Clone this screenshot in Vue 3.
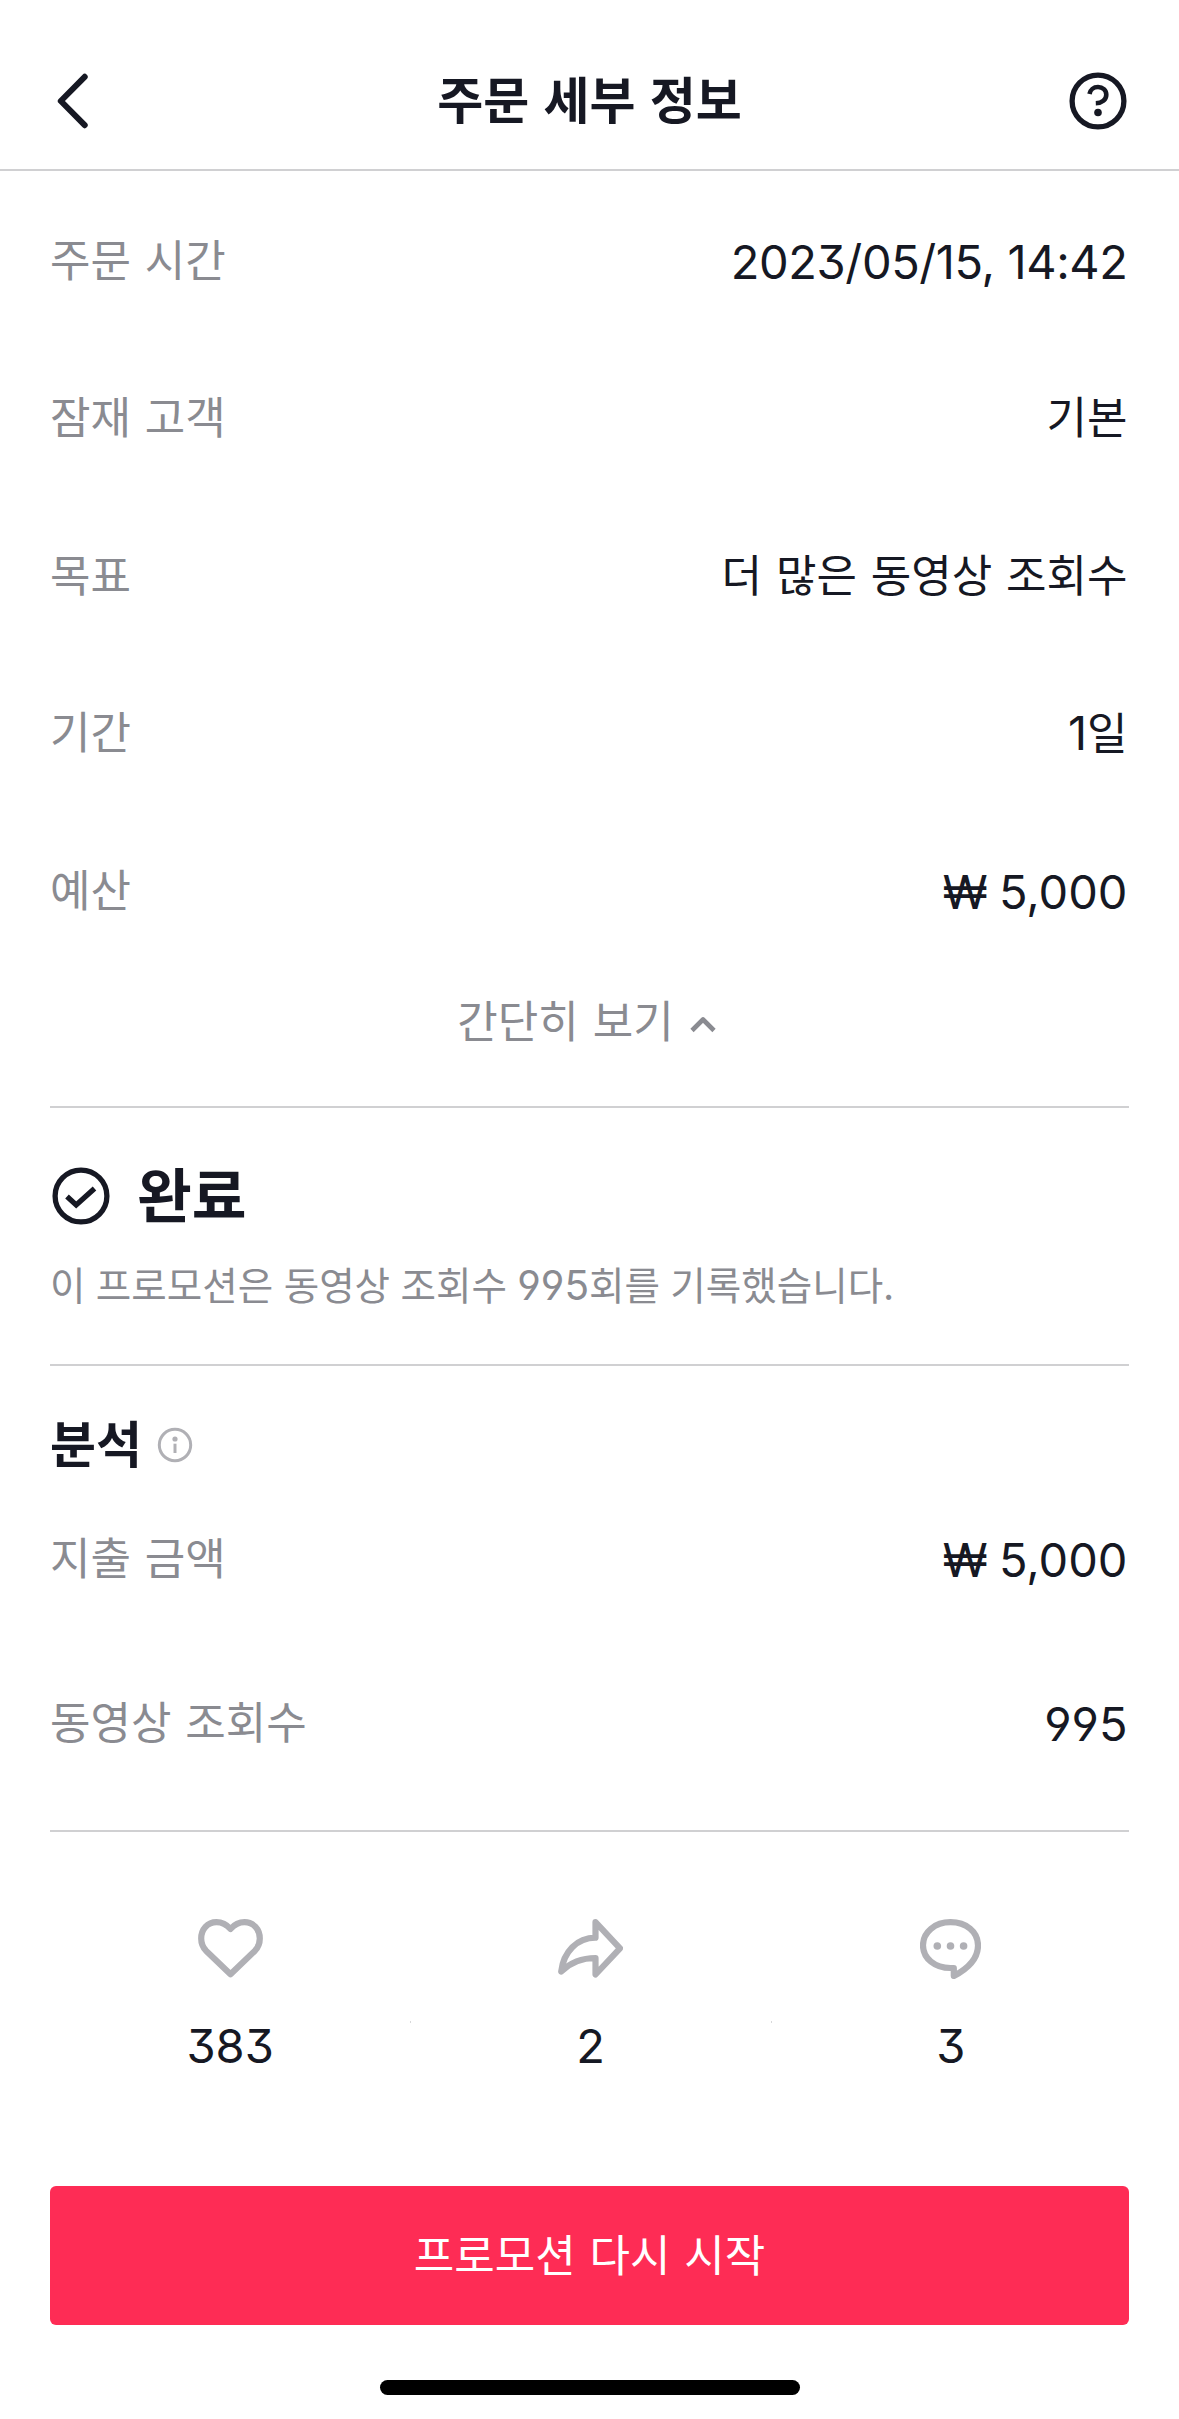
<script setup>
const orderRows = [
  { label: '주문 시간', number: '2023/05/15, 14:42', dense: true },
  { label: '잠재 고객', text: '기본' },
  { label: '목표', text: '더 많은 동영상 조회수' },
  { label: '기간', number: '1', text: '일' },
  { label: '예산', number: '₩ 5,000' },
]

const statRows = [
  { label: '지출 금액', value: '₩ 5,000' },
  { label: '동영상 조회수', value: '995' },
]
</script>

<template>
  <div class="page">
    <header class="nav">
      <svg class="nav-icon" width="60" height="60" viewBox="0 0 60 60">
        <path d="M34.700 5.800 10.800 30 34.700 54.200" />
      </svg>
      <h1>주문 세부 정보</h1>
      <svg class="nav-icon" width="58" height="58" viewBox="0 0 58 58">
        <circle class="ring" cx="29" cy="29" r="25.900" />
        <path class="mark" d="M20.500 22C21.200 17.800 24.600 15 29 15C33.700 15 37.300 18.200 37.300 22.700C37.300 27.500 33 31 26.800 31.200" />
        <circle class="dot" cx="29" cy="40.500" r="3.800" />
      </svg>
    </header>

    <main>
      <section class="order">
        <div v-for="row in orderRows" :key="row.label" class="row">
          <span class="label">{{ row.label }}</span>
          <span class="value" :class="{ hangul: !row.number, mixed: row.number && row.text }"><span v-if="row.number" class="num" :class="{ dense: row.dense }">{{ row.number }}</span>{{ row.text }}</span>
        </div>
        <div class="collapse">
          <span>간단히 보기</span>
          <svg width="26" height="18" viewBox="0 0 26 18"><path d="M2 15.500 13 4.500 24 15.500" /></svg>
        </div>
      </section>

      <section class="status">
        <div class="status-head">
          <svg width="58" height="58" viewBox="0 0 58 58">
            <circle cx="29" cy="29" r="25.900" />
            <path d="M15 29.500 24.200 38 42.500 21.500" />
          </svg>
          <h2>완료</h2>
        </div>
        <p>이 프로모션은 동영상 조회수 <span class="count">995</span>회를 기록했습니다.</p>
      </section>

      <section class="analysis">
        <div class="analysis-head">
          <h3>분석</h3>
          <svg width="36" height="36" viewBox="0 0 36 36">
            <circle class="ring" cx="18" cy="18" r="15.700" />
            <circle class="dot" cx="18" cy="12" r="2.600" />
            <path d="M18 16.700V26" />
          </svg>
        </div>
        <div v-for="row in statRows" :key="row.label" class="row">
          <span class="label">{{ row.label }}</span>
          <span class="value"><span class="num">{{ row.value }}</span></span>
        </div>
      </section>

      <section class="engagement">
        <div class="metric">
          <svg width="65" height="60" viewBox="0 0 65 60">
            <path d="M32.500 10C28.500 5.500 23.800 3.200 18.500 3.200C9.500 3.200 3.200 10.300 3.200 19.500C3.200 24.500 5 28.500 8 31.700L32.500 55.300L57 31.700C60 28.500 61.800 24.500 61.800 19.500C61.800 10.300 55.500 3.200 46.500 3.200C41.200 3.200 36.500 5.500 32.500 10Z" />
          </svg>
          <span class="num">383</span>
        </div>
        <div class="metric">
          <svg width="65" height="60" viewBox="0 0 65 60">
            <path d="M37.500 3.200 62 29.300 37.500 55.500V39C26 39 13 43 3.200 52.500C5.500 33 19 18.700 37.500 18.700Z" />
          </svg>
          <span class="num">2</span>
        </div>
        <div class="metric">
          <svg width="61" height="60" viewBox="0 0 61 60">
            <path d="M58 26.500C58 12.500 46 3.200 30.500 3.200C15 3.200 3 13 3 26.300C3 39.500 15 49 30.500 49H33.800V57C48 49.500 58 39.500 58 26.500Z" />
            <circle cx="17.300" cy="27" r="3.800" />
            <circle cx="30.500" cy="27" r="3.800" />
            <circle cx="43.600" cy="27" r="3.800" />
          </svg>
          <span class="num">3</span>
        </div>
      </section>

      <button type="button" class="restart">프로모션 다시 시작</button>
    </main>

    <div class="home-bar"></div>
  </div>
</template>

<style>
body {
  background: #fff;
}
</style>

<style scoped>
.page {
  width: 1179px;
  height: 2419px;
  overflow: hidden;
  background: #fff;
  color: #161823;
  font-family: "Noto Sans CJK KR", sans-serif;
  font-size: 44px;
  word-spacing: 4px;
}
svg {
  display: block;
  flex: none;
  fill: none;
  stroke-linecap: round;
  stroke-linejoin: round;
}
h1, h2, h3, p {
  margin: 0;
}
.nav {
  display: flex;
  align-items: center;
  justify-content: space-between;
  box-sizing: border-box;
  height: 171px;
  padding: 33px 52px 0 50px;
  border-bottom: 2px solid #d0d0d2;
}
.nav h1 {
  padding-bottom: 8px;
  font-size: 50px;
  line-height: 70px;
  font-weight: 700;
  word-spacing: 3px;
}
.nav-icon {
  stroke: #161823;
  stroke-width: 6;
}
.nav-icon .ring {
  stroke-width: 5.300;
}
.nav-icon .mark {
  stroke-width: 4.600;
  stroke-linecap: butt;
}
.nav-icon .dot {
  fill: #161823;
  stroke: none;
}
main {
  padding: 0 50px;
}
section {
  box-sizing: border-box;
  border-bottom: 2px solid #d0d0d2;
}
.row {
  display: flex;
  justify-content: space-between;
  align-items: center;
}
.label {
  padding-bottom: 6px;
  color: #8a8b91;
}
.value {
  padding-right: 1.500px;
  line-height: 60px;
}
.hangul {
  padding-bottom: 6px;
}
.mixed {
  padding-bottom: 3px;
}
.num {
  font-family: Inter, "Noto Sans CJK KR", sans-serif;
  font-size: 47px;
  font-weight: 400;
  font-feature-settings: "cv09", "cv04";
  word-spacing: -2px;
}
.dense {
  letter-spacing: -.4px;
  word-spacing: 0;
}
.order {
  height: 937px;
  padding-top: 11px;
}
.order .row {
  height: 157.500px;
}
.collapse {
  display: flex;
  align-items: center;
  justify-content: center;
  gap: 16px;
  height: 104px;
  padding-right: 6px;
  color: #8a8b91;
}
.collapse span {
  padding-bottom: 6px;
}
.collapse svg {
  stroke: #8a8b91;
  stroke-width: 4.600;
  stroke-linecap: butt;
  margin-top: 5px;
}
.status {
  height: 258px;
  padding-top: 48px;
}
.status-head {
  display: flex;
  align-items: center;
  gap: 27px;
  height: 80px;
  padding-left: 2px;
}
.status-head svg {
  stroke: #161823;
  stroke-width: 5.300;
}
.status-head svg path {
  stroke-linecap: butt;
  stroke-linejoin: miter;
}
.status h2 {
  padding-bottom: 9px;
  font-size: 59.500px;
  line-height: 80px;
}
.status p {
  font-size: 38.600px;
  line-height: 60px;
  margin-top: 17px;
  color: #8a8b91;
  word-spacing: 1.700px;
}
.count {
  font-family: Inter, sans-serif;
  font-size: 40.500px;
  line-height: 1;
  font-weight: 400;
  font-feature-settings: "cv09", "cv04";
}
.analysis {
  height: 466px;
  padding-top: 44px;
}
.analysis-head {
  display: flex;
  align-items: center;
  gap: 15px;
  height: 70px;
}
.analysis h3 {
  padding-bottom: 8px;
  font-size: 50px;
  line-height: 70px;
}
.analysis-head svg {
  stroke: #b0b0b5;
  stroke-width: 3;
}
.analysis-head .dot {
  fill: #b0b0b5;
  stroke: none;
}
.analysis-head path {
  stroke-linecap: butt;
}
.analysis .row {
  height: 164px;
}
.analysis .row:nth-of-type(2) {
  margin-top: -3px;
}
.engagement {
  display: flex;
  height: 354px;
  margin-right: -2px;
  padding-top: 87px;
  border: none;
}
.metric {
  position: relative;
  flex: 1;
  display: flex;
  flex-direction: column;
  align-items: center;
  gap: 37px;
}
.metric + .metric::before {
  content: "";
  position: absolute;
  left: 0;
  top: 102px;
  width: 1px;
  height: 2px;
  background: #d8d8da;
}
.metric svg {
  stroke: #b0b0b5;
  stroke-width: 6.200;
}
.metric circle {
  fill: #b0b0b5;
  stroke: none;
}
.metric .num {
  line-height: 60px;
}
.restart {
  display: block;
  width: 100%;
  height: 139px;
  padding: 0 0 6px;
  border: 0;
  border-radius: 6px;
  background: #fe2c55;
  color: #fff;
  font: 400 44px/60px "Noto Sans CJK KR", sans-serif;
  word-spacing: 4px;
}
.home-bar {
  width: 420px;
  height: 15px;
  margin: 55px auto 0;
  border-radius: 8px;
  background: #000;
}
</style>
